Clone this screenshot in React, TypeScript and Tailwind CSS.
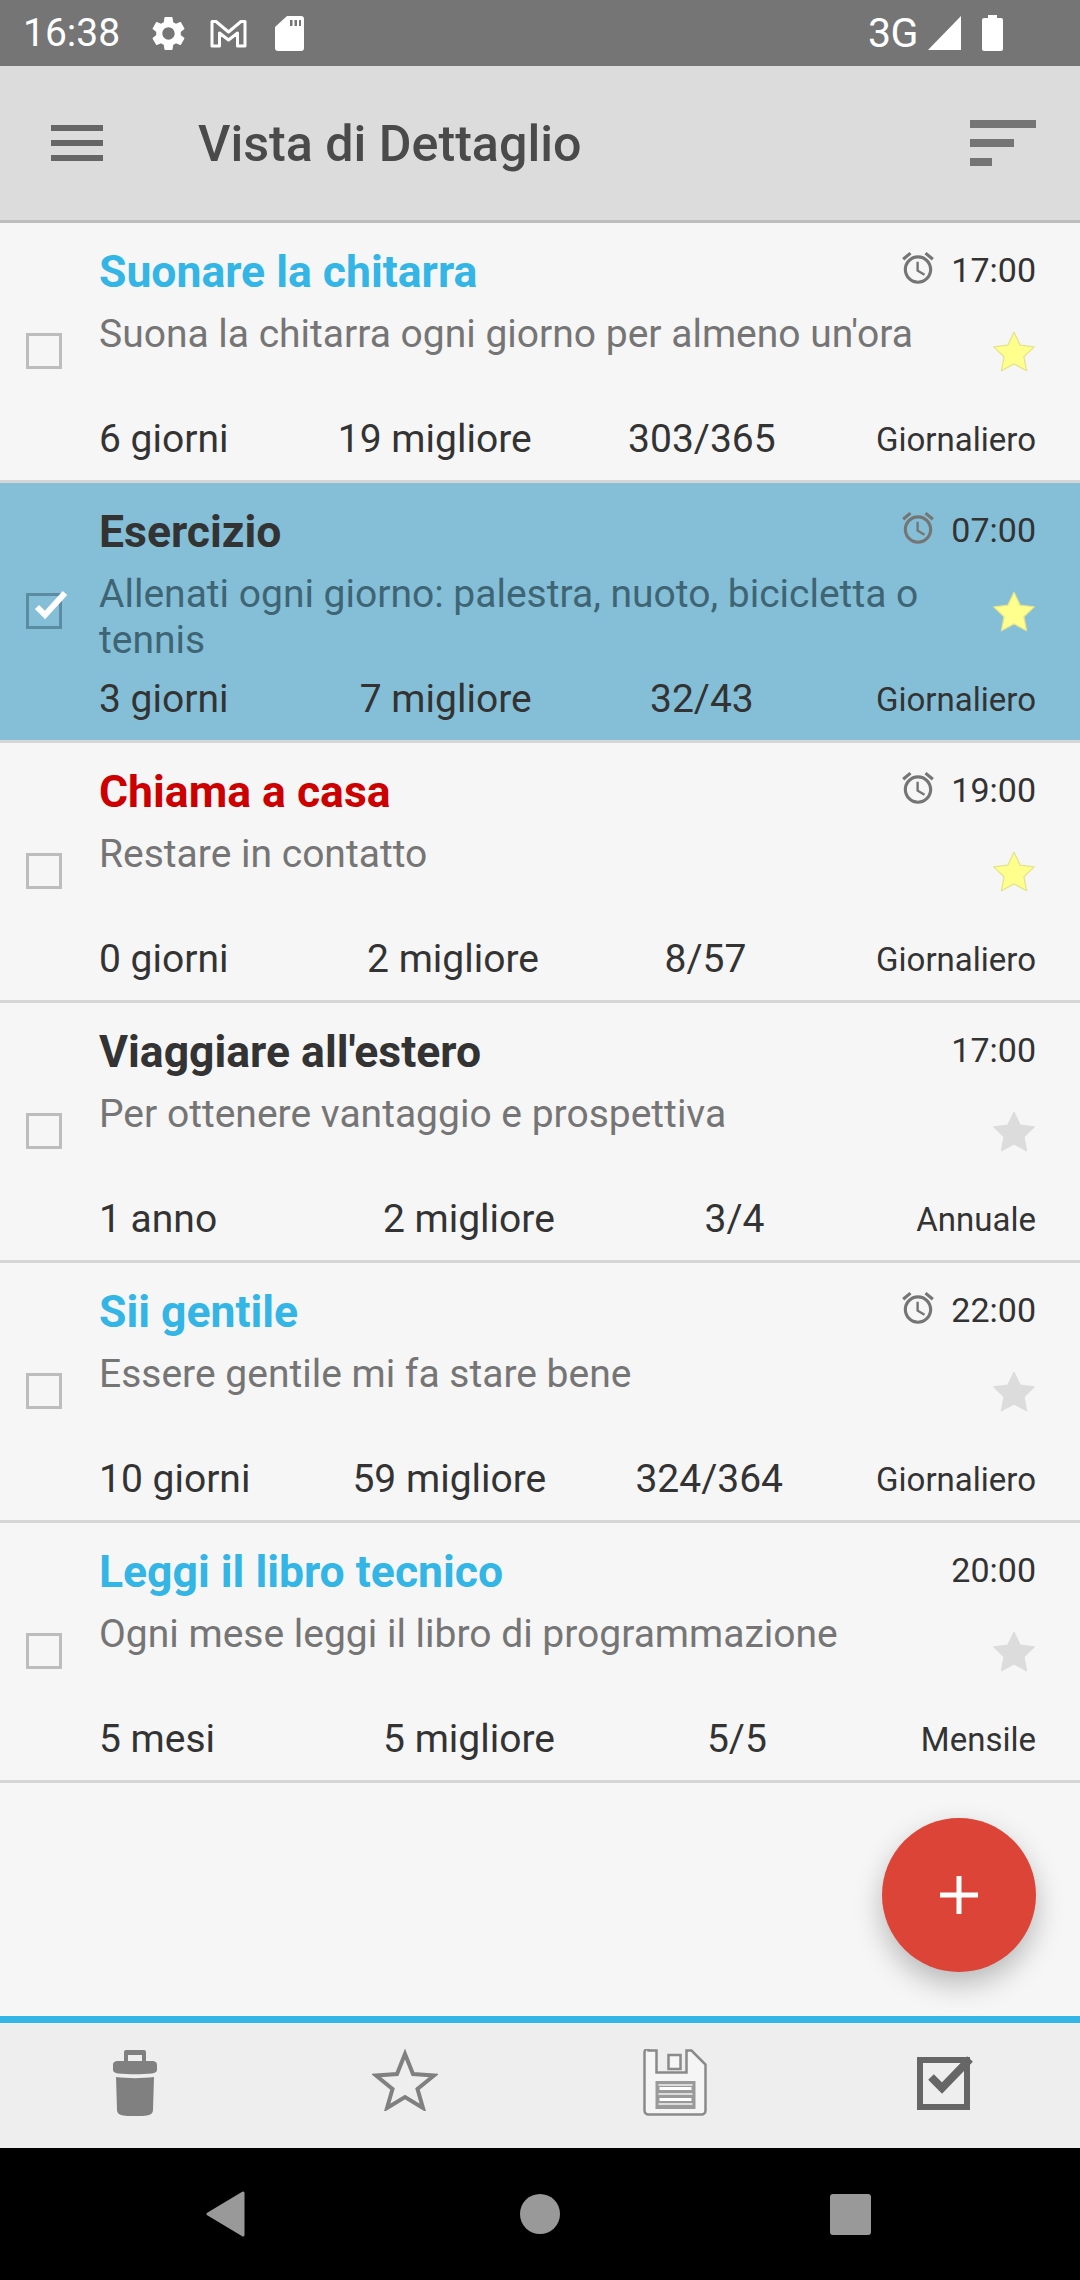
import React from 'react';

type Habit = {
  title: string;
  titleColor: string;
  desc: string;
  time: string;
  alarm: boolean;
  star: 'yellow' | 'grey';
  streak: string;
  best: string;
  count: string;
  freq: string;
  selected?: boolean;
};

const habits: Habit[] = [
  { title: 'Suonare la chitarra', titleColor: 'text-[#33b5e5]', desc: "Suona la chitarra ogni giorno per almeno un'ora", time: '17:00', alarm: true, star: 'yellow', streak: '6 giorni', best: '19 migliore', count: '303/365', freq: 'Giornaliero' },
  { title: 'Esercizio', titleColor: 'text-[#333333]', desc: 'Allenati ogni giorno: palestra, nuoto, bicicletta o tennis', time: '07:00', alarm: true, star: 'yellow', streak: '3 giorni', best: '7 migliore', count: '32/43', freq: 'Giornaliero', selected: true },
  { title: 'Chiama a casa', titleColor: 'text-[#cc0000]', desc: 'Restare in contatto', time: '19:00', alarm: true, star: 'yellow', streak: '0 giorni', best: '2 migliore', count: '8/57', freq: 'Giornaliero' },
  { title: "Viaggiare all'estero", titleColor: 'text-[#333333]', desc: 'Per ottenere vantaggio e prospettiva', time: '17:00', alarm: false, star: 'grey', streak: '1 anno', best: '2 migliore', count: '3/4', freq: 'Annuale' },
  { title: 'Sii gentile', titleColor: 'text-[#33b5e5]', desc: 'Essere gentile mi fa stare bene', time: '22:00', alarm: true, star: 'grey', streak: '10 giorni', best: '59 migliore', count: '324/364', freq: 'Giornaliero' },
  { title: 'Leggi il libro tecnico', titleColor: 'text-[#33b5e5]', desc: 'Ogni mese leggi il libro di programmazione', time: '20:00', alarm: false, star: 'grey', streak: '5 mesi', best: '5 migliore', count: '5/5', freq: 'Mensile' },
];

const GEAR = 'M19.14 12.94c.04-.3.06-.61.06-.94 0-.32-.02-.64-.07-.94l2.03-1.58c.18-.14.23-.41.12-.61l-1.92-3.32c-.12-.22-.37-.29-.59-.22l-2.39.96c-.5-.38-1.03-.7-1.62-.94l-.36-2.54c-.04-.24-.24-.41-.48-.41h-3.84c-.24 0-.43.17-.47.41l-.36 2.54c-.59.24-1.13.57-1.62.94l-2.39-.96c-.22-.08-.47 0-.59.22L2.74 8.87c-.12.21-.08.47.12.61l2.03 1.58c-.05.3-.09.63-.09.94s.02.64.07.94l-2.03 1.58c-.18.14-.23.41-.12.61l1.92 3.32c.12.22.37.29.59.22l2.39-.96c.5.38 1.03.7 1.62.94l.36 2.54c.05.24.24.41.48.41h3.84c.24 0 .44-.17.47-.41l.36-2.54c.59-.24 1.13-.56 1.62-.94l2.39.96c.22.08.47 0 .59-.22l1.92-3.32c.12-.22.07-.47-.12-.61l-2.01-1.58zM12 15.6c-1.98 0-3.6-1.62-3.6-3.6s1.62-3.6 3.6-3.6 3.6 1.62 3.6 3.6-1.62 3.6-3.6 3.6z';
const ALARM = 'M22 5.72l-4.6-3.86-1.29 1.53 4.6 3.86L22 5.72zM7.88 3.39L6.6 1.86 2 5.71l1.29 1.53 4.59-3.85zM12.5 8H11v6l4.75 2.85.75-1.23-4-2.37V8zM12 4c-4.97 0-9 4.03-9 9s4.02 9 9 9c4.97 0 9-4.03 9-9s-4.03-9-9-9zm0 16c-3.87 0-7-3.13-7-7s3.13-7 7-7 7 3.13 7 7-3.13 7-7 7z';
const STAR = 'M12 2.5l2.95 6.2 6.8.85-5 4.7 1.3 6.75L12 17.7 5.95 21l1.3-6.75-5-4.7 6.8-.85z';

function StatusBar() {
  return (
    <div className="h-[66px] bg-[#757575] flex items-center pl-[23px] pr-[77px] text-white">
      <span className="text-[39px] leading-none">16:38</span>
      <svg className="ml-[28px] w-[41px] h-[41px]" viewBox="0 0 24 24" fill="#fff"><path d={GEAR} /></svg>
      <svg className="ml-[21px] w-[37px] h-[30px]" viewBox="0 0 37 30" fill="none" stroke="#fff" strokeWidth="3" strokeLinejoin="round">
        <path d="M2 28V3.500h4L18.500 14 31 3.500h4V28h-7.500V15L18.500 22 9.500 15V28z" />
      </svg>
      <svg className="ml-[28px] w-[29px] h-[35px]" viewBox="0 0 29 35" fill="#fff">
        <path fillRule="evenodd" d="M12 0h14a3 3 0 013 3v29a3 3 0 01-3 3H3a3 3 0 01-3-3V11zM15 4v6h2.500V4zM19.500 4v6H22V4zM24 4v6h2V4z" />
      </svg>
      <span className="ml-auto text-[41px] leading-none tracking-[-0.5px]">3G</span>
      <svg className="ml-[10px] w-[33px] h-[34px]" viewBox="0 0 33 34" fill="#fff"><path d="M33 0v34H0z" /></svg>
      <svg className="ml-[21px] w-[21px] h-[36px]" viewBox="0 0 21 36" fill="#fff">
        <path d="M6 0h9v3h4a2 2 0 012 2v29a2 2 0 01-2 2H2a2 2 0 01-2-2V5a2 2 0 012-2h4z" />
      </svg>
    </div>
  );
}

function TopBar() {
  return (
    <div className="h-[157px] bg-[#dcdcdc] border-b-[3px] border-[#bdbdbd] flex items-center pl-[51px] pr-[44px]">
      <div className="w-[52px] flex flex-col gap-[9px]">
        <div className="h-[6px] bg-[#666666]" />
        <div className="h-[6px] bg-[#666666]" />
        <div className="h-[6px] bg-[#666666]" />
      </div>
      <h1 className="ml-[95px] mt-[2px] text-[50.2px] leading-none font-medium text-[#4a4a4a]">Vista di Dettaglio</h1>
      <div className="ml-auto flex flex-col gap-[11px] w-[66px]">
        <div className="h-[8px] w-[66px] bg-[#757575]" />
        <div className="h-[8px] w-[44px] bg-[#757575]" />
        <div className="h-[8px] w-[22px] bg-[#757575]" />
      </div>
    </div>
  );
}

function Row({ h }: { h: Habit }) {
  const sel = !!h.selected;
  const daily = h.freq === 'Giornaliero';
  return (
    <div className={`h-[260px] border-b-[3px] flex border-[#d6d6d6] ${sel ? 'bg-[#84bfd7]' : ''}`}>
      <div className="w-[99px] shrink-0 pl-[26px] pb-[2px] flex items-center">
        <div className={`relative w-[36px] h-[36px] border-[3px] ${sel ? 'border-[#5b8ca1]' : 'border-[#bdbdbd]'}`}>
          {sel && (
            <svg className="absolute left-[5px] top-[-6px] w-[34px] h-[30px]" viewBox="0 0 34 30" fill="none" stroke="#fff" strokeWidth="6">
              <path d="M3 17l8 8L31 3" />
            </svg>
          )}
        </div>
      </div>
      <div className="flex-1 pr-[44px] flex flex-col">
        <div className="h-[96px] flex items-center">
          <span className={`mt-[2px] text-[44.5px] leading-none font-bold ${h.titleColor}`}>{h.title}</span>
          <div className="ml-auto flex items-center mt-[-2px]">
            {h.alarm && (
              <svg className="w-[38px] h-[38px] mr-[14px] mt-[-4px]" viewBox="0 0 24 24" fill="#757575"><path d={ALARM} /></svg>
            )}
            <span className="text-[34px] leading-none text-[#333333]">{h.time}</span>
          </div>
        </div>
        <div className="flex h-[90px] mt-[-8px]">
          <p className={`w-[856px] text-[39px] leading-[46px] ${sel ? 'text-[#3f6575]' : 'text-[#757575]'}`}>{h.desc}</p>
          <svg className="ml-auto mr-[-3px] mt-[16px] w-[50px] h-[50px]" viewBox="0 0 24 24" fill={h.star === 'yellow' ? '#ffff8d' : '#dcdcdc'} stroke={h.star === 'yellow' ? '#e3e38c' : '#dcdcdc'} strokeWidth="0.6" strokeLinejoin="round">
            <path d={STAR} />
          </svg>
        </div>
        <div className="flex-1 flex items-center justify-between text-[#333333] pb-[2px]">
          <span className={`text-[39px] leading-none ${daily ? 'pr-[13px]' : 'pr-[16px]'}`}>{h.streak}</span>
          <span className="text-[39px] leading-none">{h.best}</span>
          <span className={`text-[39px] leading-none ${daily ? 'pr-[4px]' : 'pr-[2px]'}`}>{h.count}</span>
          <span className="text-[33px] leading-none">{h.freq}</span>
        </div>
      </div>
    </div>
  );
}

function BottomBar() {
  return (
    <div className="h-[132px] border-t-[7px] border-[#33b5e5] bg-[#eeeeee] pb-[6px] grid grid-cols-4 items-center justify-items-center">
      <svg className="w-[44px] h-[66px]" viewBox="0 0 44 66" fill="#808080">
        <path fillRule="evenodd" d="M13 0h18a2 2 0 012 2v9h6c3 0 5 1 5 4v5c0 2-2 3-5 3.500-10 1-24 1-34 0C2 23 0 22 0 20v-5c0-3 2-4 5-4h6V2a2 2 0 012-2zM15 5v6h14V5z" />
        <path d="M3 27c12 1.500 26 1.500 38 0l-1 33c0 3-2 5-6 5.500-7 1-17 1-24 0C6 65 4 63 4 60z" />
      </svg>
      <svg className="w-[66px] h-[63px] mt-[-6px]" viewBox="0 0 66 63" fill="none" stroke="#808080" strokeWidth="4">
        <path d="M33 6l8 20 21 1.500-16.500 13.500 5.500 19L33 49 15 60l5.500-19L4 27.500 25 26z" />
      </svg>
      <svg className="w-[65px] h-[67px]" viewBox="0 0 64 67" fill="#f5f5f5" stroke="#8a8a8a" strokeWidth="2.500">
        <path d="M5 1.500h8v22h30v-22h5l14 14v46a4 4 0 01-4 4H5a4 4 0 01-4-4v-58a4 4 0 014-4z" />
        <path strokeWidth="2.500" d="M25 6h12v14H25z" />
        <path fill="#9a9a9a" stroke="none" d="M12 32h40v28H12z" />
        <path fill="#fff" stroke="none" d="M16 38h32v3H16zM16 49h32v3H16z" />
        <path fill="#dcdcdc" stroke="none" d="M15 35h34v2H15zM15 44h34v2H15zM15 54h34v2H15z" />
      </svg>
      <svg className="w-[56px] h-[54px]" viewBox="0 0 56 54" fill="none" stroke="#666666">
        <path strokeWidth="6" d="M3 4h47v47H3z" />
        <path strokeWidth="8" d="M14 21l11 11L53 3" />
      </svg>
    </div>
  );
}

function NavBar() {
  return (
    <div className="h-[132px] bg-black flex items-center">
      <svg className="ml-[206px] w-[39px] h-[46px]" viewBox="0 0 39 46" fill="#999999" stroke="#999999" strokeWidth="3" strokeLinejoin="round">
        <path d="M2 23L37 2v42z" />
      </svg>
      <div className="ml-[275px] w-[40px] h-[40px] rounded-full bg-[#999999]" />
      <div className="ml-[270px] w-[41px] h-[41px] rounded-[3px] bg-[#999999]" />
    </div>
  );
}

export default function App() {
  return (
    <div className="relative w-[1080px] h-[2280px] bg-[#f6f6f6] flex flex-col font-['Roboto',sans-serif] overflow-hidden">
      <StatusBar />
      <TopBar />
      <div className="flex-1">
        {habits.map((h) => (
          <Row key={h.title} h={h} />
        ))}
      </div>
      <button className="absolute left-[882px] top-[1818px] w-[154px] h-[154px] rounded-full bg-[#db4437] shadow-[0_12px_28px_rgba(0,0,0,0.25)] flex items-center justify-center">
        <svg className="w-[38px] h-[38px]" viewBox="0 0 38 38" fill="#fff"><path d="M16.500 0h5v16.500H38v5H21.500V38h-5V21.500H0v-5h16.500z" /></svg>
      </button>
      <BottomBar />
      <NavBar />
    </div>
  );
}
